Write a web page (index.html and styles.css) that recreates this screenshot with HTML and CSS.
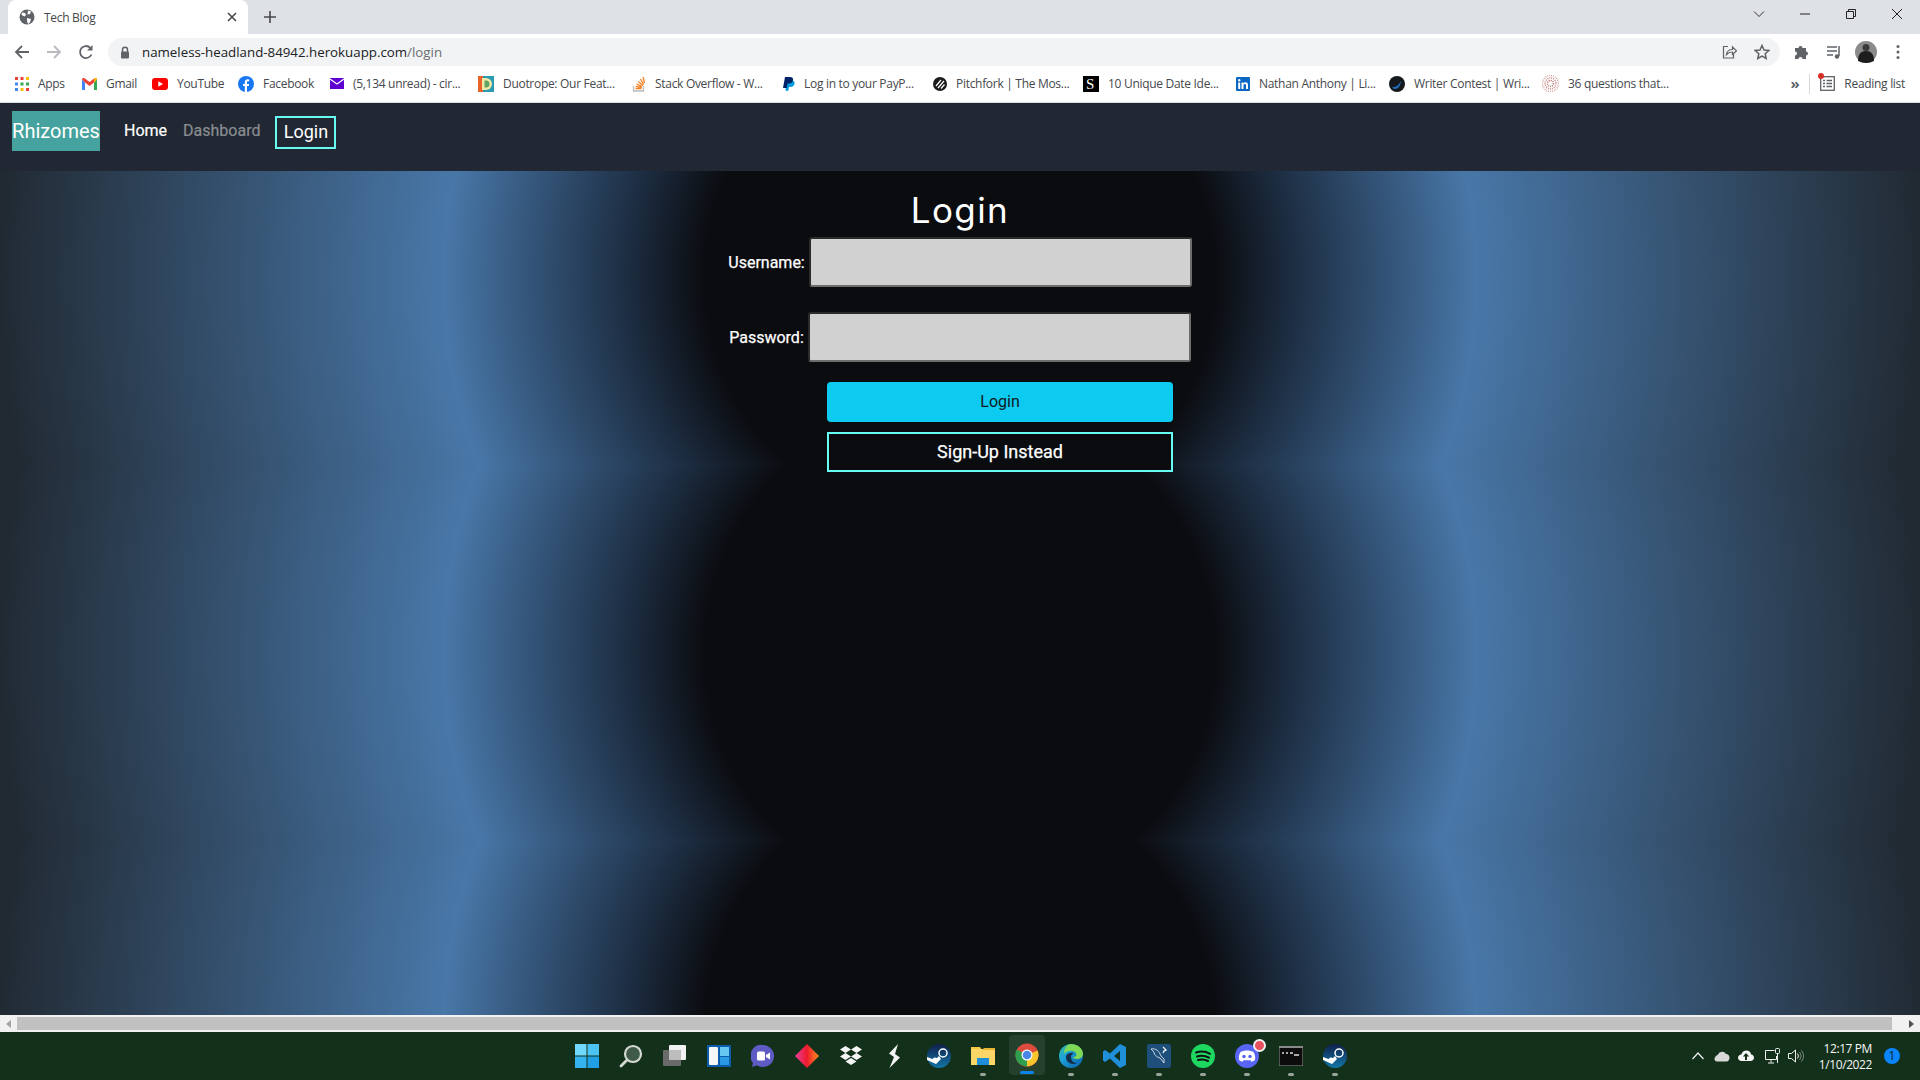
FILE: index.html
```html
<!DOCTYPE html>
<html>
    <head>
        <meta http-equiv="Content-Type" content="text/html; charset=UTF-8">
        <title>Tech Blog</title>
        <link rel="stylesheet" href="styles.css">
    </head>
    <body>
        <div class="tabstrip">
            <div class="tab">
                <svg class="tab-globe" width="16" height="16" viewBox="0 0 16 16"><circle cx="8" cy="8" r="7.5" fill="#5f6368"/><path d="M3 3.5l3 .5 1 2-1.500 1.500-3-1.500zM9 1.500l3 1-1 2.500-2.500.5zM8 9l4 1-1 3.500-2 1.500-1-3z" fill="#fff"/></svg>
                <span class="tab-title">Tech Blog</span>
                <svg class="tab-close" width="10" height="10" viewBox="0 0 10 10"><path d="M1 1l8 8M9 1l-8 8" stroke="#45484c" stroke-width="1.600"/></svg>
            </div>
            <svg class="new-tab" width="12" height="12" viewBox="0 0 12 12"><path d="M6 0v12M0 6h12" stroke="#45484c" stroke-width="1.600"/></svg>
            <div class="window-controls">
                <svg width="12" height="12" viewBox="0 0 12 12" class="win-search"><path d="M1 3.500l5 5 5-5" fill="none" stroke="#333" stroke-width="1"/></svg>
                <svg width="12" height="12" viewBox="0 0 12 12" class="win-min"><path d="M1 6h10" stroke="#222" stroke-width="1"/></svg>
                <svg width="12" height="12" viewBox="0 0 12 12" class="win-max"><path d="M1.500 3.500h7v7h-7zM3.500 3.500v-2h7v7h-2" fill="none" stroke="#222" stroke-width="1"/></svg>
                <svg width="12" height="12" viewBox="0 0 12 12" class="win-close"><path d="M1 1l10 10M11 1l-10 10" stroke="#222" stroke-width="1"/></svg>
            </div>
        </div>

        <div class="toolbar">
            <svg class="tool-back" width="16" height="16" viewBox="0 0 16 16"><path d="M15 8H2M8 2L2 8l6 6" fill="none" stroke="#5f6368" stroke-width="1.800"/></svg>
            <svg class="tool-forward" width="16" height="16" viewBox="0 0 16 16"><path d="M1 8h13M8 2l6 6-6 6" fill="none" stroke="#b9bbbe" stroke-width="1.800"/></svg>
            <svg class="tool-reload" width="16" height="16" viewBox="0 0 16 16"><path d="M13.500 10.500A6 6 0 1 1 12.300 3.800" fill="none" stroke="#5f6368" stroke-width="1.800"/><path d="M14.500 1v5.500H9z" fill="#5f6368"/></svg>
            <div class="omnibox">
                <svg class="lock" width="10" height="13" viewBox="0 0 10 13"><path d="M2.500 6V3.800a2.500 2.500 0 0 1 5 0V6" fill="none" stroke="#5f6368" stroke-width="1.500"/><rect x="1" y="5.500" width="8" height="7" rx="1" fill="#5f6368"/></svg>
                <span class="url">nameless-headland-84942.herokuapp.com<span class="url-path">/login</span></span>
                <svg class="omni-share" width="16" height="16" viewBox="0 0 16 16"><path d="M7 2.500H2.500v11.500h10V10" fill="none" stroke="#5f6368" stroke-width="1.200"/><path d="M5.500 10.500c.5-3.500 3-5 6-5V3l4 3.800-4 3.700V8c-2.500 0-4.500.8-6 2.500z" fill="none" stroke="#5f6368" stroke-width="1.200"/></svg>
                <svg class="omni-star" width="16" height="16" viewBox="0 0 16 16"><path d="M8 1.500l2 4.500 4.800.5-3.600 3.200 1 4.800L8 12.100l-4.200 2.400 1-4.800L1.200 6.500 6 6z" fill="none" stroke="#5f6368" stroke-width="1.500"/></svg>
            </div>
            <svg class="tool-puzzle" width="16" height="16" viewBox="0 0 16 16"><path d="M1 5h3.500a2 2 0 1 1 4 0H12v3.500a2 2 0 1 1 0 4V16H8.500a2 2 0 1 0-4 0H1v-3.500a2 2 0 1 0 0-4z" fill="#5f6368" transform="translate(0 -1)"/></svg>
            <svg class="tool-media" width="16" height="16" viewBox="0 0 16 16"><path d="M1 3h10M1 7h10M1 11h6" stroke="#5f6368" stroke-width="1.500"/><path d="M13 2v10" stroke="#5f6368" stroke-width="1.500"/><circle cx="11" cy="12.500" r="2.200" fill="#5f6368"/></svg>
            <svg class="tool-avatar" width="22" height="22" viewBox="0 0 22 22"><circle cx="11" cy="11" r="11" fill="#8b8b8b"/><circle cx="11" cy="6.500" r="3.500" fill="#3a3a3a"/><path d="M3 20c0-7 3-10 8-10s8 3 8 10q-8 4-16 0z" fill="#1d1d1d"/></svg>
            <svg class="tool-kebab" width="4" height="16" viewBox="0 0 4 16"><circle cx="2" cy="2.500" r="1.500" fill="#5f6368"/><circle cx="2" cy="8" r="1.500" fill="#5f6368"/><circle cx="2" cy="13.500" r="1.500" fill="#5f6368"/></svg>
        </div>

        <div class="bookmarks">
            <a class="bm bm-apps"><svg width="14" height="14" viewBox="0 0 14 14"><path d="M0 0h3v3H0z" fill="#ea4335"/><path d="M5.500 0h3v3h-3z" fill="#ea4335"/><path d="M11 0h3v3h-3z" fill="#fbbc05"/><path d="M0 5.500h3v3H0z" fill="#4285f4"/><path d="M5.500 5.500h3v3h-3z" fill="#34a853"/><path d="M11 5.500h3v3h-3z" fill="#34a853"/><path d="M0 11h3v3H0z" fill="#4285f4"/><path d="M5.500 11h3v3h-3z" fill="#fbbc05"/><path d="M11 11h3v3h-3z" fill="#ea4335"/></svg>Apps</a>
            <a class="bm bm-gmail"><svg width="15" height="12" viewBox="0 0 15 12"><path d="M0 1.500V12h3V4.500z" fill="#4285f4"/><path d="M15 1.500V12h-3V4.500z" fill="#34a853"/><path d="M0 1.500C0 0 1.500-.4 2.500.3L7.500 4 12.500.3c1-.7 2.500-.3 2.500 1.200L12 4.500 7.500 8 3 4.500z" fill="#ea4335"/><path d="M12 4.500L15 1.500C15 .3 13.500-.4 12.500.3L12 .7z" fill="#fbbc05"/></svg>Gmail</a>
            <a class="bm bm-youtube"><svg width="16" height="12" viewBox="0 0 16 12"><rect width="16" height="12" rx="3" fill="#f00"/><path d="M6.300 3.300v5.400L11 6z" fill="#fff"/></svg>YouTube</a>
            <a class="bm bm-facebook"><svg width="16" height="16" viewBox="0 0 16 16"><circle cx="8" cy="8" r="8" fill="#1877f2"/><path d="M6.800 16V10H5V8h1.800V6.300C6.800 4.300 8 3.300 9.700 3.300l1.500.1V5.200h-1c-.9 0-1.200.5-1.200 1.100V8h2.100l-.3 2H9v6z" fill="#fff"/></svg>Facebook</a>
            <a class="bm bm-mail"><svg width="14" height="11" viewBox="0 0 14 11"><rect width="14" height="11" fill="#5f01d1"/><path d="M0 1l7 5 7-5" fill="none" stroke="#fff" stroke-width="1.200"/></svg>(5,134 unread) - cir...</a>
            <a class="bm bm-duotrope"><svg width="16" height="16" viewBox="0 0 16 16"><rect width="16" height="16" fill="#2a9bb0"/><rect width="5" height="16" fill="#e8622a"/><path d="M4 2h4a6 6 0 0 1 0 12H4z" fill="#f1e9a8"/><path d="M6.500 4.500H8a3.500 3.500 0 0 1 0 7H6.500z" fill="#5fa463"/></svg>Duotrope: Our Feat...</a>
            <a class="bm bm-stack"><svg width="14" height="16" viewBox="0 0 14 16"><path d="M1.500 10v5h10v-5" fill="none" stroke="#bcbbbb" stroke-width="1.300"/><path d="M3.500 12.500h6M3.700 10.300l6 1M4.500 8l5.500 2.700M6.200 5.500l4.700 4M8.500 3l3.200 5.500M11 1l1.600 6" stroke="#f48024" stroke-width="1.300"/></svg>Stack Overflow - W...</a>
            <a class="bm bm-paypal"><svg width="12" height="14" viewBox="0 0 12 14"><path d="M3.500 3.500h5c2.500 0 3.500 1.300 3 3.300-.5 2.200-2 3.200-4 3.200H6l-.7 3.800H2.500z" fill="#009cde"/><path d="M2 0h5c2.500 0 3.500 1.300 3 3.300-.5 2.200-2 3.200-4 3.200H4.500L3.800 11H0z" fill="#012169"/></svg>Log in to your PayP...</a>
            <a class="bm bm-pitchfork"><svg width="14" height="14" viewBox="0 0 14 14"><circle cx="7" cy="7" r="7" fill="#1c1c1c"/><path d="M3 9l5-6M5 11l6-7M8 11.500l3.500-4" stroke="#fff" stroke-width="1.200"/></svg>Pitchfork | The Mos...</a>
            <a class="bm bm-unique"><svg width="16" height="16" viewBox="0 0 16 16"><rect width="16" height="16" fill="#000"/><text x="3" y="13" fill="#fff" font-family="Liberation Serif" font-size="15">S</text></svg>10 Unique Date Ide...</a>
            <a class="bm bm-linkedin"><svg width="14" height="14" viewBox="0 0 14 14"><rect width="14" height="14" rx="1" fill="#0a66c2"/><path d="M2.200 5.500h2V12h-2zM5.500 5.500h2v1c.5-.8 1.200-1.200 2.200-1.200 1.700 0 2.300 1.100 2.300 2.800V12h-2V8.500c0-.9-.3-1.500-1.200-1.500-.8 0-1.300.6-1.300 1.500V12h-2z" fill="#fff"/><circle cx="3.200" cy="3.200" r="1.200" fill="#fff"/></svg>Nathan Anthony | Li...</a>
            <a class="bm bm-writer"><svg width="16" height="16" viewBox="0 0 16 16"><circle cx="8" cy="8" r="8" fill="#15181c"/><path d="M3 11c3 1 6-1 9-6-.5 5-3 8-6 8-1.500 0-2.500-1-3-2z" fill="#1f6fc0"/></svg>Writer Contest | Wri...</a>
            <a class="bm bm-questions"><svg width="17" height="17" viewBox="0 0 17 17"><circle cx="8.500" cy="8.500" r="8" fill="none" stroke="#d8a5a5" stroke-width="1.500" stroke-dasharray="1 1"/><circle cx="8.500" cy="8.500" r="5.500" fill="none" stroke="#c98686" stroke-width="1.500" stroke-dasharray="1 1"/><circle cx="8.500" cy="8.500" r="3" fill="none" stroke="#b96d6d" stroke-width="1.500" stroke-dasharray="1 1"/></svg>36 questions that...</a>
            <span class="bm-more">»</span>
            <span class="bm-sep"></span>
            <a class="bm bm-reading"><span class="reading-icon"><svg width="15" height="15" viewBox="0 0 15 15"><rect x=".7" y=".7" width="13.600" height="13.600" fill="none" stroke="#5f6368" stroke-width="1.300"/><path d="M3 4.500h2M6.500 4.500h5.500M3 7.500h2M6.500 7.500h5.500M3 10.500h2M6.500 10.500h5.500" stroke="#5f6368" stroke-width="1.300"/></svg><span class="reading-dot"></span></span>Reading list</a>
        </div>

        <nav class="navbar">
            <a class="brand">Rhizomes</a>
            <a class="nav-link nav-active">Home</a>
            <a class="nav-link nav-muted">Dashboard</a>
            <a class="nav-login">Login</a>
        </nav>

        <main class="page">
            <h1 class="page-title">Login</h1>
            <form class="login-form">
                <div class="field field-user">
                    <label>Username:</label>
                    <input type="text">
                </div>
                <div class="field field-pass">
                    <label>Password:</label>
                    <input type="password">
                </div>
                <div class="actions">
                    <button type="button" class="btn-login">Login</button>
                    <button type="button" class="btn-signup">Sign-Up Instead</button>
                </div>
            </form>
        </main>

        <div class="hscroll">
            <span class="arrow arrow-left"></span>
            <span class="thumb"></span>
            <span class="arrow arrow-right"></span>
        </div>

        <footer class="taskbar">
            <div class="task-icons">
                <div class="task"><svg width="24" height="24" viewBox="0 0 24 24"><path d="M0 0h11.500v11.500H0z" fill="#6fd8fb"/><path d="M12.500 0H24v11.500H12.500z" fill="#4cc4f3"/><path d="M0 12.500h11.500V24H0z" fill="#35b3ee"/><path d="M12.500 12.500H24V24H12.500z" fill="#1fa0e4"/></svg></div>
                <div class="task"><svg width="24" height="24" viewBox="0 0 24 24"><circle cx="14" cy="10" r="8" fill="#3f5a48" stroke="#d4d8d4" stroke-width="2.200"/><path d="M8 16l-6 6" stroke="#d4d8d4" stroke-width="2.800" stroke-linecap="round"/></svg></div>
                <div class="task"><svg width="24" height="24" viewBox="0 0 24 24"><rect x="6" y="1" width="17" height="15" rx="1" fill="#f2f2f2"/><rect x="0" y="6" width="18" height="16" rx="1" fill="#6a6a6a"/><rect x="6" y="6" width="12" height="10" fill="#bdbdbd"/></svg></div>
                <div class="task"><svg width="24" height="24" viewBox="0 0 24 24"><rect width="24" height="22" y="1" fill="#0b5cab"/><rect x="2" y="3" width="9" height="18" rx="1" fill="#f4f6f8"/><rect x="13" y="3" width="9" height="9" fill="#66c8f2"/><rect x="13" y="13" width="9" height="8" fill="#2a9ae6"/></svg></div>
                <div class="task"><svg width="24" height="24" viewBox="0 0 24 24"><path d="M12 1a11 11 0 1 1-6 20.200L1 23l1-4A11 11 0 0 1 12 1z" fill="#5f5bc4"/><rect x="6" y="7.500" width="8" height="9" rx="1.500" fill="#fff"/><path d="M15 11l4-2.500v7L15 13z" fill="#fff"/></svg></div>
                <div class="task"><svg width="24" height="24" viewBox="0 0 24 24"><defs><linearGradient id="diamond" x1="0" y1="0" x2="1" y2="0"><stop offset="0" stop-color="#e53fa0"/><stop offset=".5" stop-color="#f01a2e"/><stop offset="1" stop-color="#f7941d"/></linearGradient></defs><path d="M12 0l12 12-12 12L0 12z" fill="url(#diamond)"/></svg></div>
                <div class="task"><svg width="24" height="24" viewBox="0 0 24 24"><path d="M6.500 2l5.500 3.500L6.500 9 1 5.500zM17.500 2L23 5.500 17.500 9 12 5.500zM6.500 9l5.500 3.500L6.500 16 1 12.500zM17.500 9l5.500 3.500-5.500 3.500-5.500-3.500zM12 14l5.500 3.500L12 21l-5.500-3.500z" fill="#f5f5f5"/></svg></div>
                <div class="task"><svg width="24" height="24" viewBox="0 0 24 24"><path d="M15 0L6 9.500l5 3.500-4.500 11L17 13.500 12 10z" fill="#f2f2f2"/></svg></div>
                <div class="task"><svg width="24" height="24" viewBox="0 0 24 24"><defs><linearGradient id="steam" x1="0" y1="0" x2="0" y2="1"><stop offset="0" stop-color="#10204a"/><stop offset="1" stop-color="#1276a8"/></linearGradient></defs><circle cx="12" cy="12" r="12" fill="url(#steam)"/><circle cx="16" cy="9" r="4" fill="none" stroke="#fff" stroke-width="1.500"/><path d="M0 13l8 3 4-4 2 3-5 5-9-4z" fill="#fff"/><circle cx="8" cy="16" r="2.500" fill="#fff"/></svg></div>
                <div class="task task-run"><svg width="24" height="24" viewBox="0 0 24 24"><path d="M0 3h9l2 3h-11z" fill="#f4c542"/><rect y="5" width="24" height="16" fill="#fcd667"/><path d="M0 6h11l2-2h11v2z" fill="#eab530"/><path d="M6 14h12v7H6z" fill="#1f8ed8"/></svg></div>
                <div class="task task-active"><svg width="24" height="24" viewBox="0 0 24 24"><circle cx="12" cy="12" r="11.500" fill="#dd4b3e"/><path d="M12 12L22.500 7.500A11.500 11.500 0 0 1 12 23.500z" fill="#f6c52c"/><path d="M12 12L12 23.500A11.500 11.500 0 0 1 1.700 6.500z" fill="#2f9e4f"/><circle cx="12" cy="12" r="5.500" fill="#fff"/><circle cx="12" cy="12" r="4.300" fill="#4a86e8"/></svg></div>
                <div class="task task-run"><svg width="24" height="24" viewBox="0 0 24 24"><defs><linearGradient id="edge" x1="0" y1="0" x2="1" y2="1"><stop offset="0" stop-color="#35c1a0"/><stop offset=".4" stop-color="#1d9fd8"/><stop offset="1" stop-color="#0b5aa8"/></linearGradient></defs><circle cx="12" cy="12" r="12" fill="url(#edge)"/><path d="M12 0c6 0 12 4 12 10 0 3-3 5-6 5-2 0-4-1-4-2 3 0 4-2 3-4-2-3-9-3-12 1 0-5 3-10 7-10z" fill="#7ed957"/><path d="M7 13c0 4 3 7 7 7 1.500 0 3-.5 4-1-4 0-6-3-6-6 0-2 1-3 3-4-4-1-8 1-8 4z" fill="#12304a"/></svg></div>
                <div class="task task-run"><svg width="24" height="24" viewBox="0 0 24 24"><path d="M17 0l6 3v18l-6 3-10-9.500L2 18l-2-1.500v-9L2 6l5 3.500zM17 7l-6 5 6 5z" fill="#1e8fd8"/></svg></div>
                <div class="task task-run"><svg width="24" height="24" viewBox="0 0 24 24"><rect width="24" height="24" rx="2" fill="#1e4f7a"/><path d="M4 5c5-1 8 2 10 7l3 3v4l-4-5c-3-1-6-3-6-6z" fill="none" stroke="#cdd9e2" stroke-width="1"/><path d="M16 3l3 3-2 1-1 2" fill="none" stroke="#e6ecef" stroke-width="1.400"/></svg></div>
                <div class="task task-run"><svg width="24" height="24" viewBox="0 0 24 24"><circle cx="12" cy="12" r="12" fill="#1ed760"/><path d="M5 8.500c5-1.500 10-1 14 1.300M6 12.500c4-1.200 8.500-.8 12 1.200M7 16c3.500-1 7-.6 10 1" fill="none" stroke="#111" stroke-width="2" stroke-linecap="round"/></svg></div>
                <div class="task task-run"><svg width="24" height="24" viewBox="0 0 24 24"><circle cx="12" cy="12" r="12" fill="#5865f2"/><path d="M5.500 8c4-2 9-2 13 0 1.500 2.500 2 5 1.500 8-1.500 1-2.500 1.500-3.500 1.700l-1-1.500h-7l-1 1.500C6.500 17.500 5.500 17 4 16c-.5-3 0-5.500 1.500-8z" fill="#fff"/><circle cx="9" cy="12.500" r="1.700" fill="#5865f2"/><circle cx="15" cy="12.500" r="1.700" fill="#5865f2"/></svg><span class="task-badge"></span></div>
                <div class="task task-run"><svg width="24" height="20" viewBox="0 0 24 20"><rect width="24" height="20" fill="#0c0c0c" stroke="#9a9a9a" stroke-width="1"/><rect width="24" height="2" fill="#8a8a8a"/><path d="M3 7h2M7 7h2M11 7h3M15 9h5" stroke="#ddd" stroke-width="1.500"/></svg></div>
                <div class="task task-run"><svg width="24" height="24" viewBox="0 0 24 24"><circle cx="12" cy="12" r="12" fill="url(#steam)"/><circle cx="16" cy="9" r="4" fill="none" stroke="#fff" stroke-width="1.500"/><path d="M0 13l8 3 4-4 2 3-5 5-9-4z" fill="#fff"/><circle cx="8" cy="16" r="2.500" fill="#fff"/></svg></div>
            </div>
            <div class="tray">
                <svg class="tray-caret" width="12" height="8" viewBox="0 0 12 8"><path d="M.5 7L6 1l5.500 6" fill="none" stroke="#f0f0f0" stroke-width="1.200"/></svg>
                <svg class="tray-onedrive" width="16" height="11" viewBox="0 0 16 11"><path d="M4 3.500A4.500 4.500 0 0 1 12 3c2 .2 3.500 1.500 3.500 3.500 0 2-1 4-3 4H3C1.500 10.500.5 9.500.5 8S2 4.500 4 3.500z" fill="#d8d8d8"/></svg>
                <svg class="tray-cloud" width="16" height="12" viewBox="0 0 16 12"><path d="M3.500 11H12.500c2 0 3.500-1.400 3.500-3.300 0-1.700-1.200-3-2.800-3.200C12.700 2 10.700.5 8.500.5 6 .5 4 2 3.500 4.300 1.500 4.500 0 6 0 7.800 0 9.600 1.500 11 3.500 11z" fill="#f5f5f5"/><path d="M8 3L4.800 6.500H7V10h2V6.500h2.200z" fill="#14301a"/></svg>
                <svg class="tray-network" width="16" height="16" viewBox="0 0 16 16"><path d="M9.500 2.500H.5v9h11V8M6 11.500v3M3 15h6" fill="none" stroke="#f0f0f0" stroke-width="1"/><rect x="10.500" y=".5" width="4" height="5" rx="1" fill="none" stroke="#f0f0f0" stroke-width="1"/><path d="M12.500 5.500V15" stroke="#f0f0f0" stroke-width="1"/></svg>
                <svg class="tray-volume" width="16" height="14" viewBox="0 0 16 14"><path d="M.5 4.500h3L7.500 1v12l-4-3.500h-3z" fill="none" stroke="#f0f0f0" stroke-width="1"/><path d="M9.500 4.500a4 4 0 0 1 0 5" fill="none" stroke="#f0f0f0"/><path d="M11.500 3a6.500 6.500 0 0 1 0 8M13.500 1.500a9 9 0 0 1 0 11" fill="none" stroke="#7b8a7f"/></svg>
                <div class="clock"><span>12:17 PM</span><span>1/10/2022</span></div>
                <span class="notify">1</span>
            </div>
        </footer>
    </body>
</html>
```

FILE: styles.css
```css
html {
    height: 100%;
}
body {
    width: 1920px;
    height: 1080px;
    margin: 0;
    overflow: hidden;
    display: flex;
    flex-direction: column;
    font-family: "Roboto", sans-serif;
}
svg {
    display: block;
    flex-shrink: 0;
}

/* browser chrome */
.tabstrip {
    height: 34px;
    background: #dee1e6;
    display: flex;
    align-items: center;
    padding-left: 8px;
}
.tab {
    width: 240px;
    height: 34px;
    box-sizing: border-box;
    background: white;
    border-radius: 8px 8px 0 0;
    display: flex;
    align-items: center;
    padding: 0 11px;
}
.tab-title {
    margin-left: 9px;
    font: 12px "Open Sans", sans-serif;
    letter-spacing: -.3px;
    color: #45484c;
    flex: 1;
}
.new-tab {
    margin-left: 16px;
}
.window-controls {
    margin-left: auto;
    display: flex;
    align-items: center;
    gap: 34px;
    padding-right: 17px;
    margin-top: -6px;
}
.toolbar {
    height: 32px;
    background: white;
    display: flex;
    align-items: center;
    padding-left: 14px;
}
.tool-forward {
    margin-left: 16px;
}
.tool-reload {
    margin-left: 16px;
}
.omnibox {
    width: 1672px;
    height: 28px;
    box-sizing: border-box;
    margin: 4px 0 0 14px;
    border-radius: 14px;
    background: #f1f3f4;
    display: flex;
    align-items: center;
    padding-left: 12px;
}
.url {
    margin-left: 12px;
    font: 13.3px "Open Sans", sans-serif;
    color: #202124;
    flex: 1;
}
.url-path {
    color: #6a6e73;
}
.omni-star {
    margin: 0 10px 0 17px;
}
.tool-puzzle {
    margin-left: 14px;
}
.tool-media {
    margin-left: 16px;
}
.tool-avatar {
    margin-left: 13px;
}
.tool-kebab {
    margin-left: 19px;
}
.toolbar svg:not(.lock):not(.omni-share):not(.omni-star) {
    margin-top: 4px;
}
.bookmarks {
    height: 36px;
    background: white;
    border-bottom: 1px solid #dadce0;
    display: flex;
    align-items: center;
    padding-left: 15px;
    font: 12px "Open Sans", sans-serif;
    letter-spacing: -.3px;
    color: #45484c;
}
.bm {
    display: flex;
    align-items: center;
    gap: 9px;
    white-space: nowrap;
    margin-top: -1px;
}
.bm-apps { width: 67px; }
.bm-gmail { width: 70px; }
.bm-youtube { width: 86px; }
.bm-facebook { width: 92px; }
.bm-mail { width: 148px; }
.bm-duotrope { width: 154px; }
.bm-stack { width: 151px; }
.bm-paypal { width: 150px; }
.bm-pitchfork { width: 150px; }
.bm-unique { width: 153px; }
.bm-linkedin { width: 153px; }
.bm-writer { width: 153px; }
.bm-more {
    margin-left: auto;
    font-size: 15px;
    font-weight: bold;
    color: #5f6368;
    margin-top: -3px;
}
.bm-sep {
    width: 1px;
    height: 20px;
    background: #d5d7da;
    margin: 0 10px;
}
.bm-reading {
    margin-right: 15px;
}
.reading-icon {
    position: relative;
}
.reading-dot {
    position: absolute;
    left: -2px;
    top: -3px;
    width: 6px;
    height: 6px;
    border-radius: 50%;
    background: #d93025;
}

/* site navbar */
.navbar {
    height: 68px;
    box-sizing: border-box;
    background: #212833;
    display: flex;
    align-items: flex-start;
    padding: 8px 0 0 12px;
}
.brand {
    width: 88px;
    height: 40px;
    line-height: 40px;
    background: #45a29e;
    color: white;
    font-size: 20px;
    text-align: center;
    white-space: nowrap;
}
.nav-link {
    font-size: 16px;
    line-height: 24px;
    margin-top: 8px;
    -webkit-text-stroke: .2px;
}
.nav-active {
    color: white;
    margin-left: 24px;
}
.nav-muted {
    color: #8a8d91;
    margin-left: 16px;
}
.nav-login {
    margin: 5px 0 0 15px;
    box-sizing: border-box;
    width: 61px;
    height: 33px;
    line-height: 27px;
    border: 2px solid #66fcf1;
    color: white;
    font-size: 18px;
    text-align: center;
}

/* login page */
.page {
    flex: 1;
    background-color: #0b0c10;
    background-image: radial-gradient(circle at center, #0b0c10 0, #0b0c10 255px, #1d2e43 335px, #4877a8 516px, #212a33 960px);
    background-size: 1920px 376px;
    background-position: 0 294px;
    display: flex;
    flex-direction: column;
    align-items: center;
}
.page-title {
    margin: 16px 0 0;
    font: 400 35px/46px "Inter", sans-serif;
    letter-spacing: 1.4px;
    color: white;
}
.login-form {
    display: flex;
    flex-direction: column;
    align-items: center;
    margin-top: 4px;
}
.field {
    display: flex;
    align-items: center;
    gap: 4px;
    height: 50px;
}
.field-pass {
    margin-top: 25px;
}
.field label {
    color: white;
    font-size: 16px;
    -webkit-text-stroke: .25px;
}
.field input {
    width: 383px;
    height: 50px;
    box-sizing: border-box;
    background: #d1d1d1;
    border: 2px solid;
    border-color: #2b2b2b #6d6d6d #6d6d6d #2b2b2b;
    border-radius: 3px;
    padding: 0;
}
.actions {
    margin: 20px 0 0 80px;
    width: 346px;
    display: flex;
    flex-direction: column;
    gap: 10px;
}
.btn-login {
    height: 40px;
    padding: 0 0 2px;
    background: #0dcaf0;
    border: 0;
    border-radius: 4px;
    color: #101820;
    font: 16px "Roboto", sans-serif;
}
.btn-signup {
    height: 40px;
    padding: 0 0 2px;
    box-sizing: border-box;
    background: #0b0c10;
    border: 2px solid #66fcf1;
    color: white;
    font: 18px "Roboto", sans-serif;
    -webkit-text-stroke: .25px;
}

/* horizontal scrollbar */
.hscroll {
    height: 17px;
    background: #f1f1f1;
    display: flex;
    align-items: center;
}
.arrow {
    width: 17px;
    display: flex;
    justify-content: center;
}
.arrow-left::before {
    content: "";
    border: 4px solid transparent;
    border-right: 5px solid #a3a3a3;
    border-left: 0;
}
.arrow-right::before {
    content: "";
    border: 4px solid transparent;
    border-left: 5px solid #505050;
    border-right: 0;
}
.thumb {
    flex: 1;
    height: 13px;
    background: #c1c1c1;
    margin-right: 11px;
}

/* windows taskbar */
.taskbar {
    height: 48px;
    background: #13301b;
    position: relative;
    display: flex;
    justify-content: center;
}
.task-icons {
    display: flex;
    margin-left: 2px;
}
.task {
    width: 44px;
    height: 48px;
    display: flex;
    align-items: center;
    justify-content: center;
    position: relative;
}
.task-run::after {
    content: "";
    position: absolute;
    left: 19px;
    bottom: 4px;
    width: 6px;
    height: 3px;
    border-radius: 2px;
    background: #9aa39c;
}
.task-active {
    background: rgba(255, 255, 255, .08);
    border-radius: 4px;
    height: 40px;
    width: 36px;
    margin: 3px 4px 0;
}
.task-active::after {
    content: "";
    position: absolute;
    left: 11px;
    bottom: 1px;
    width: 14px;
    height: 3px;
    border-radius: 2px;
    background: #0a84e8;
}
.task-badge {
    position: absolute;
    right: 3px;
    top: 7px;
    width: 9px;
    height: 9px;
    border: 2px solid #f0f0f0;
    border-radius: 50%;
    background: #e8505b;
}
.tray {
    position: absolute;
    right: 0;
    top: 0;
    height: 48px;
    display: flex;
    align-items: center;
    padding-right: 20px;
    color: #f5f5f5;
}
.tray-onedrive {
    margin-left: 10px;
}
.tray-cloud {
    margin-left: 8px;
}
.tray-network {
    margin-left: 11px;
}
.tray-volume {
    margin-left: 7px;
}
.clock {
    width: 62px;
    margin-left: 6px;
    display: flex;
    flex-direction: column;
    align-items: flex-end;
    gap: 1px;
    font: 12px/15px "Open Sans", sans-serif;
    letter-spacing: -.4px;
}
.notify {
    width: 16px;
    height: 16px;
    margin-left: 12px;
    border-radius: 50%;
    background: #0a84ff;
    color: #0d2a18;
    font: 12px/16px "Open Sans", sans-serif;
    text-align: center;
}
```
